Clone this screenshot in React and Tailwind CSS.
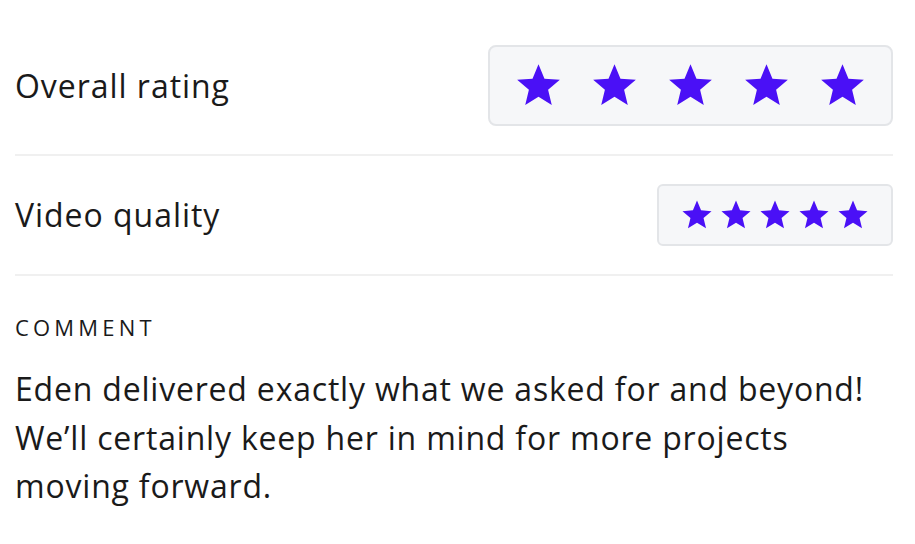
import React from 'react';

function Star({ size }) {
    return (
        <svg width={size} height={size} viewBox="0 0 24 24" className="shrink-0">
            <path
                d="M12 1.2l3.05 7.3 7.85.6-6 5.1 1.87 7.7L12 17.8l-6.77 4.1 1.87-7.7-6-5.1 7.85-.6z"
                fill="#4a10f6"
            />
        </svg>
    );
}

function Stars({ big }) {
    return big ? (
        <div className="flex items-center gap-[29px] h-[81px] px-[25px] rounded-lg border-2 border-[#e3e5e8] bg-[#f6f7f9]">
            {[1, 2, 3, 4, 5].map(i => <Star key={i} size={47} />)}
        </div>
    ) : (
        <div className="flex items-center gap-[7px] h-[62px] px-[22px] rounded-md border-2 border-[#e3e5e8] bg-[#f6f7f9]">
            {[1, 2, 3, 4, 5].map(i => <Star key={i} size={32} />)}
        </div>
    );
}

export default function App() {
    return (
        <div className="w-[915px] h-[544px] bg-white pt-[16px] pl-[15px] pr-[22px] text-[#1a1a1a]" style={{ fontFamily: '"Open Sans", sans-serif' }}>
            {/* Ratings */}
            <div className="flex items-center justify-between pt-[29px] pb-[28px] border-b-2 border-[#f0f0f0]">
                <span className="text-[32px] tracking-[0.03em]">Overall rating</span>
                <Stars big />
            </div>
            <div className="flex items-center justify-between py-[28px] border-b-2 border-[#f0f0f0]">
                <span className="text-[32px] tracking-[0.03em]">Video quality</span>
                <Stars />
            </div>

            {/* Comment */}
            <div className="pt-[40px]">
                <p className="text-[22px] font-medium tracking-[0.19em] leading-none">COMMENT</p>
                <p className="mt-[27px] text-[32px] leading-[48.5px] tracking-[0.025em]">
                    Eden delivered exactly what we asked for and beyond! We’ll certainly keep her in mind for more projects moving forward.
                </p>
            </div>
        </div>
    );
}
